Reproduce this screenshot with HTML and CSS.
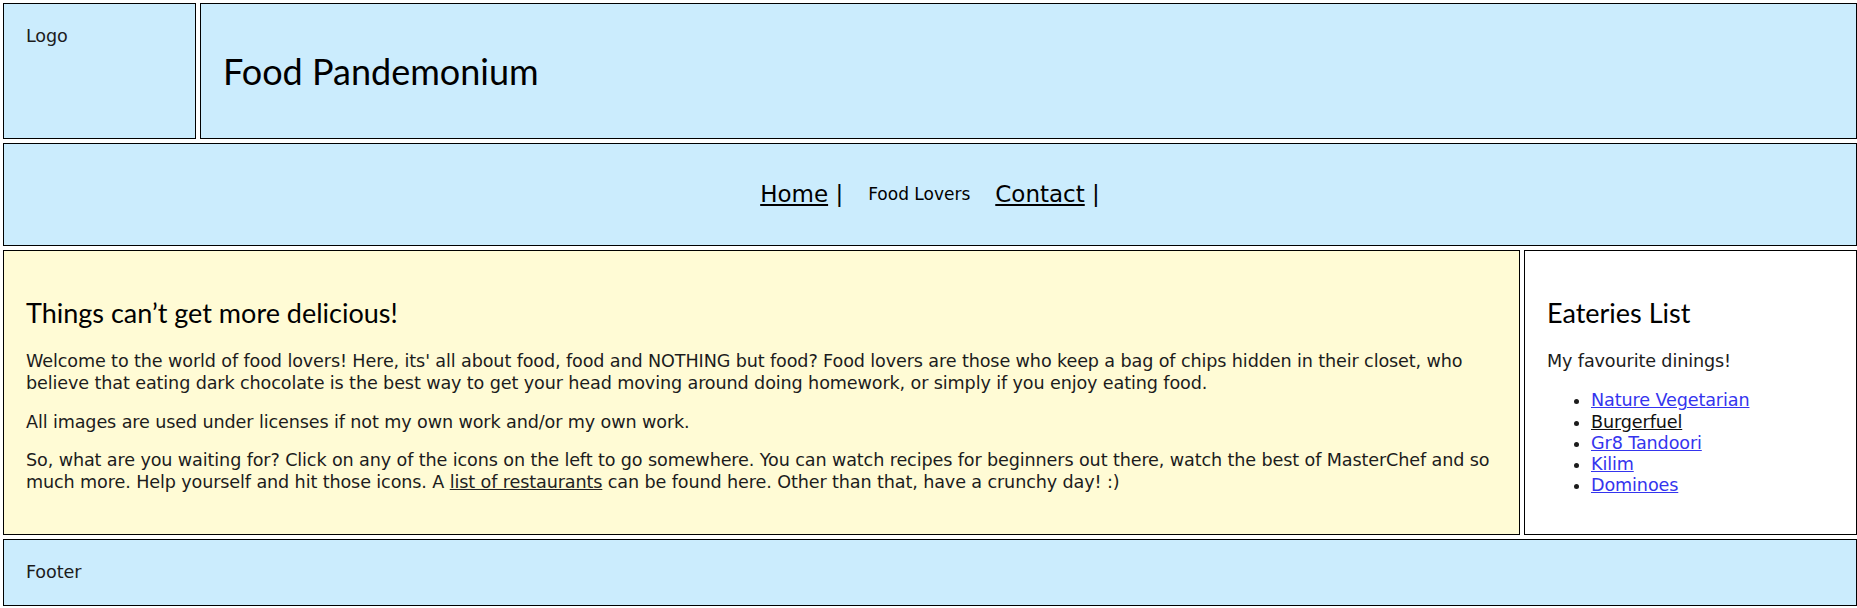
FILE: index.html
```html
<!DOCTYPE html>
<html lang="en">
<head>
<meta charset="utf-8">
<title>Food Pandemonium</title>
<link rel="stylesheet" href="styles.css">
</head>
<body>
<div class="page">
  <div class="logo">Logo</div>
  <header class="banner"><h1 class="title">Food Pandemonium</h1></header>
  <nav class="nav">
    <ul class="nav-list">
      <li class="nav-item"><a class="nav-link" href="#">Home</a> |</li>
      <li class="nav-item nav-current">Food Lovers</li>
      <li class="nav-item"><a class="nav-link" href="#">Contact</a> |</li>
    </ul>
  </nav>
  <main class="content">
    <h2 class="heading">Things can’t get more delicious!</h2>
    <p class="text">Welcome to the world of food lovers! Here, its' all about food, food and NOTHING but food? Food lovers are those who keep a bag of chips hidden in their closet, who believe that eating dark chocolate is the best way to get your head moving around doing homework, or simply if you enjoy eating food.</p>
    <p class="text">All images are used under licenses if not my own work and/or my own work.</p>
    <p class="text">So, what are you waiting for? Click on any of the icons on the left to go somewhere. You can watch recipes for beginners out there, watch the best of MasterChef and so much more. Help yourself and hit those icons. A <a class="inline-link" href="#">list of restaurants</a> can be found here. Other than that, have a crunchy day! :)</p>
  </main>
  <aside class="side">
    <h2 class="heading">Eateries List</h2>
    <p class="text">My favourite dinings!</p>
    <ul class="eateries">
      <li><a class="eatery" href="#">Nature Vegetarian</a></li>
      <li><a class="eatery eatery-visited" href="#">Burgerfuel</a></li>
      <li><a class="eatery" href="#">Gr8 Tandoori</a></li>
      <li><a class="eatery" href="#">Kilim</a></li>
      <li><a class="eatery" href="#">Dominoes</a></li>
    </ul>
  </aside>
  <footer class="foot">Footer</footer>
</div>
</body>
</html>
```
FILE: styles.css
```css
* { box-sizing: border-box; }

html, body {
  margin: 0;
  padding: 0;
  background: #ffffff;
}

body {
  font-family: "DejaVu Sans", "Liberation Sans", sans-serif;
  font-size: 17.6px;
  line-height: 1.21;
  letter-spacing: -0.12px;
  color: #1c1c1c;
}

.page {
  display: grid;
  grid-template-columns: 193px 1320px 333px;
  grid-template-rows: auto auto auto auto;
  gap: 4px;
  padding: 3px 0 1px 3px;
}

.logo,
.banner,
.nav,
.content,
.side,
.foot {
  border: 1px solid #000;
  padding: 22px;
}

.logo {
  background: #cbecfd;
  grid-column: 1;
}

.banner {
  background: #cbecfd;
  grid-column: 2 / 4;
}

.title {
  margin: 23px 0;
  font-family: Lato, "DejaVu Sans", sans-serif;
  font-weight: normal;
  font-size: 36px;
  line-height: 44px;
  letter-spacing: normal;
  color: #000;
}

.nav {
  background: #cbecfd;
  grid-column: 1 / 4;
}

.nav-list {
  list-style: none;
  margin: 0;
  padding: 0;
  height: 57px;
  display: flex;
  justify-content: center;
  align-items: center;
  gap: 25px;
  color: #000;
}

.nav-item {
  font-size: 23px;
  letter-spacing: normal;
}

.nav-link {
  color: #000;
}

.nav-current {
  font-size: 17px;
}

.content {
  background: #fffbd5;
  grid-column: 1 / 3;
}

.side {
  background: #ffffff;
  grid-column: 3;
}

.heading {
  margin: 24.4px 0 22px;
  font-family: Lato, "DejaVu Sans", sans-serif;
  font-weight: normal;
  font-size: 27px;
  line-height: 32px;
  letter-spacing: normal;
  color: #000;
}

.text {
  margin: 17.6px 0;
}

.inline-link {
  color: #222;
}

.eateries {
  margin: 17.6px 0 15.2px;
  padding-left: 44px;
}

.eatery {
  color: #3434ee;
}

.eatery-visited {
  color: #111;
}

.foot {
  background: #cbecfd;
  grid-column: 1 / 4;
}
```
